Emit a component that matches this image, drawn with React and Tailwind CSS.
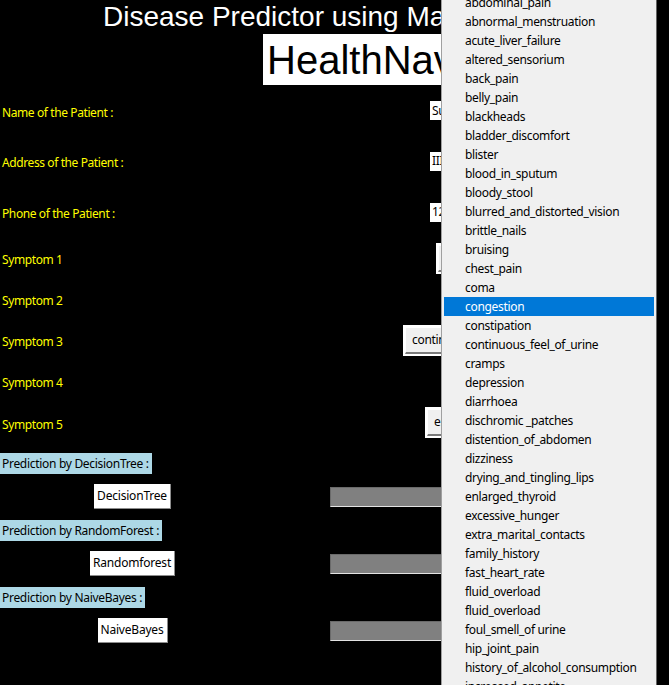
import React from "react";

const items = [
  "abdominal_pain",
  "abnormal_menstruation",
  "acute_liver_failure",
  "altered_sensorium",
  "back_pain",
  "belly_pain",
  "blackheads",
  "bladder_discomfort",
  "blister",
  "blood_in_sputum",
  "bloody_stool",
  "blurred_and_distorted_vision",
  "brittle_nails",
  "bruising",
  "chest_pain",
  "coma",
  "congestion",
  "constipation",
  "continuous_feel_of_urine",
  "cramps",
  "depression",
  "diarrhoea",
  "dischromic _patches",
  "distention_of_abdomen",
  "dizziness",
  "drying_and_tingling_lips",
  "enlarged_thyroid",
  "excessive_hunger",
  "extra_marital_contacts",
  "family_history",
  "fast_heart_rate",
  "fluid_overload",
  "fluid_overload",
  "foul_smell_of urine",
  "hip_joint_pain",
  "history_of_alcohol_consumption",
  "increased_appetite",
];

const ui = { fontFamily: '"Noto Sans", "Open Sans", sans-serif' };

function Label({ children }) {
  return (
    <span className="text-[12px] leading-none tracking-[-0.4px] text-[#ffff00] pl-[2px]" style={ui}>
      {children}
    </span>
  );
}

function Entry({ text }) {
  return (
    <div
      className="h-[19px] w-[160px] bg-white text-[12px] tracking-[-0.3px] text-black pl-[2px] flex items-center whitespace-nowrap overflow-hidden"
      style={ui}
    >
      {text}
    </div>
  );
}

function OptionMenu({ text, width }) {
  return (
    <div className="border-2 border-white h-[31px] flex" style={{ width }}>
      <div
        className="flex-1 bg-[#f0f0f0] border-t border-l border-t-white border-l-white border-b-2 border-r-2 border-b-[#7a7a7a] border-r-[#7a7a7a] flex items-center pl-[6px] text-[12px] tracking-[-0.3px] text-black whitespace-nowrap overflow-hidden"
        style={ui}
      >
        {text}
      </div>
    </div>
  );
}

function PredLabel({ children }) {
  return (
    <div className="h-[21px] flex">
      <div
        className="bg-[#add8e6] text-black text-[12px] tracking-[-0.3px] h-full flex items-center pl-[2px] pr-[3px] whitespace-nowrap"
        style={ui}
      >
        {children}
      </div>
    </div>
  );
}

function PredRow({ name, width }) {
  return (
    <div className="h-[25px] flex items-center">
      <div className="w-[265px] flex justify-center">
        <div
          className="h-[25px] bg-white border-r border-b border-r-[#8c8c8c] border-b-[#8c8c8c] flex items-center justify-center text-[12px] tracking-[-0.2px] text-black"
          style={{ ...ui, width }}
        >
          {name}
        </div>
      </div>
      <div className="ml-[65px] w-[200px] h-[20px] bg-[#808080] border-t border-l border-t-[#6a6a6a] border-l-[#6a6a6a] border-b border-b-[#e3e3e3]" />
    </div>
  );
}

export default function App() {
  return (
    <div className="relative w-[669px] h-[685px] bg-black overflow-hidden">
      <div className="flex flex-col">
        <div className="h-[34px] pl-[103px] flex items-center">
          <span
            className="text-white text-[28px] leading-none whitespace-nowrap"
            style={{ fontFamily: '"Liberation Sans", Arial, sans-serif' }}
          >
            Disease Predictor using Machine Learning
          </span>
        </div>
        <div className="h-[51px] pl-[263px] flex">
          <div
            className="bg-white text-black text-[40px] leading-none h-full flex items-center pl-[4px] pr-[6px] whitespace-nowrap"
            style={{ fontFamily: '"Liberation Sans", Arial, sans-serif' }}
          >
            HealthNavigator
          </div>
        </div>

        <div className="h-[51px] flex items-center">
          <div className="w-[430px]"><Label>Name of the Patient :</Label></div>
          <Entry text="Sudhanshu" />
        </div>
        <div className="h-[50px] flex items-center">
          <div className="w-[430px]"><Label>Address of the Patient :</Label></div>
          <Entry text="IIIT" />
        </div>
        <div className="h-[52px] flex items-center">
          <div className="w-[430px]"><Label>Phone of the Patient :</Label></div>
          <Entry text="1234567890" />
        </div>

        <div className="h-[40px] flex items-center">
          <div className="w-[436px]"><Label>Symptom 1</Label></div>
          <OptionMenu text="" width={120} />
        </div>
        <div className="h-[42px] flex items-center">
          <div className="w-[436px]"><Label>Symptom 2</Label></div>
        </div>
        <div className="h-[40px] flex items-center">
          <div className="w-[403px]"><Label>Symptom 3</Label></div>
          <OptionMenu text="continuous_sneezing" width={150} />
        </div>
        <div className="h-[42px] flex items-center">
          <div className="w-[436px]"><Label>Symptom 4</Label></div>
        </div>
        <div className="h-[41px] flex items-center">
          <div className="w-[425px]"><Label>Symptom 5</Label></div>
          <OptionMenu text="enlarged_thyroid" width={120} />
        </div>

        <div className="mt-[10px] flex flex-col">
          <PredLabel>Prediction by DecisionTree :</PredLabel>
          <div className="mt-[10px]"><PredRow name="DecisionTree" width={77} /></div>
          <div className="mt-[11px]"><PredLabel>Prediction by RandomForest :</PredLabel></div>
          <div className="mt-[10px]"><PredRow name="Randomforest" width={85} /></div>
          <div className="mt-[11px]"><PredLabel>Prediction by NaiveBayes :</PredLabel></div>
          <div className="mt-[10px]"><PredRow name="NaiveBayes" width={70} /></div>
        </div>
      </div>

      <div className="absolute left-[441px] top-0 w-[216px] h-[685px] bg-[#f0f0f0] border-l border-l-[#a0a0a0] border-r border-r-[#646464] overflow-hidden">
        <div className="flex flex-col px-[2px] mt-[-7px]">
          {items.map((it, i) => (
            <div
              key={i}
              className={
                i === 16
                  ? "h-[19px] flex items-center pl-[21px] bg-[#0078d7] text-white text-[12px] tracking-[-0.32px] whitespace-nowrap"
                  : "h-[19px] flex items-center pl-[21px] text-black text-[12px] tracking-[-0.32px] whitespace-nowrap"
              }
              style={ui}
            >
              {it}
            </div>
          ))}
        </div>
      </div>
    </div>
  );
}
